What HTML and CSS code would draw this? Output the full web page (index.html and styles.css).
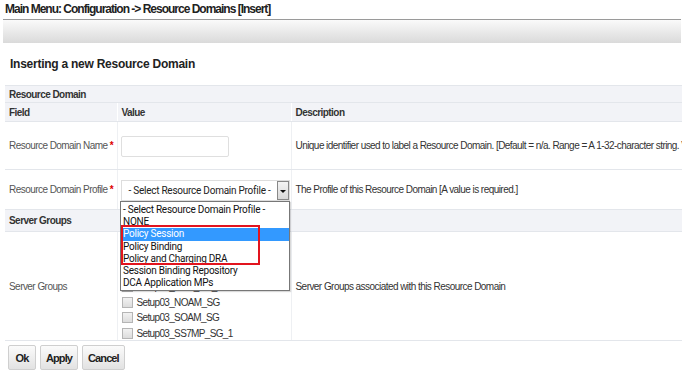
FILE: index.html
```html
<!DOCTYPE html>
<html lang="en">

<head>
    <meta charset="UTF-8">
    <title>Resource Domains [Insert]</title>
    <link rel="stylesheet" href="styles.css">
</head>

<body>
    <div class="page-title">Main Menu: Configuration -&gt; Resource Domains [Insert]</div>
    <div class="toolbar"></div>

    <div class="form-title">Inserting a new Resource Domain</div>

    <div class="form-wrap">
        <table class="form-table">
            <colgroup>
                <col class="col-field">
                <col class="col-value">
                <col class="col-desc">
            </colgroup>
            <tr class="section-row">
                <td colspan="3">Resource Domain</td>
            </tr>
            <tr class="head-row">
                <td>Field</td>
                <td>Value</td>
                <td>Description</td>
            </tr>
            <tr class="row-name">
                <td class="label">Resource Domain Name <span class="req">*</span></td>
                <td><div class="text-input"></div></td>
                <td class="desc">Unique identifier used to label a Resource Domain. [Default = n/a. Range = A 1-32-character string. Valid characters are alphanumeric and underscore.]</td>
            </tr>
            <tr class="row-profile">
                <td class="label">Resource Domain Profile <span class="req">*</span></td>
                <td>
                    <div class="select-box">
                        <span class="select-text">- Select Resource Domain Profile -</span>
                        <span class="select-arrow"></span>
                    </div>
                </td>
                <td class="desc">The Profile of this Resource Domain [A value is required.]</td>
            </tr>
            <tr class="section-row section-tall">
                <td colspan="3">Server Groups</td>
            </tr>
            <tr class="row-groups">
                <td class="label">Server Groups</td>
                <td>
                    <div class="check-list">
                        <div class="check-item"><span class="check"></span>Setup03_DAMP_SG_1</div>
                        <div class="check-item"><span class="check"></span>Setup03_DAMP_SG_2</div>
                        <div class="check-item"><span class="check"></span>Setup03_SBR_SG_1</div>
                        <div class="check-item"><span class="check"></span>Setup03_IPFE_SG_1</div>
                        <div class="check-item"><span class="check"></span>Setup03_NOAM_SG</div>
                        <div class="check-item"><span class="check"></span>Setup03_SOAM_SG</div>
                        <div class="check-item"><span class="check"></span>Setup03_SS7MP_SG_1</div>
                    </div>
                </td>
                <td class="desc">Server Groups associated with this Resource Domain</td>
            </tr>
        </table>

        <!-- open select list, drawn over the table -->
        <div class="drop-list">
            <div class="drop-item">- Select Resource Domain Profile -</div>
            <div class="drop-item">NONE</div>
            <div class="drop-item active">Policy Session</div>
            <div class="drop-item">Policy Binding</div>
            <div class="drop-item">Policy and Charging DRA</div>
            <div class="drop-item">Session Binding Repository</div>
            <div class="drop-item">DCA Application MPs</div>
            <div class="mark-box"></div>
        </div>
    </div>

    <div class="buttons">
        <button class="btn">Ok</button>
        <button class="btn">Apply</button>
        <button class="btn">Cancel</button>
    </div>
</body>

</html>
```

FILE: styles.css
```css
body {
    margin: 0;
    font-family: "Liberation Sans", Arial, sans-serif;
    font-size: 10px;
    letter-spacing: -0.55px;
    color: #333;
    background: #fff;
    width: 685px;
    height: 376px;
    overflow: hidden;
}

.page-title {
    font-size: 12px;
    font-weight: bold;
    letter-spacing: -1px;
    color: #222;
    padding: 2px 0 0 5px;
    height: 19px;
    box-sizing: border-box;
    white-space: nowrap;
}

.toolbar {
    margin: 0 4px 0 3px;
    height: 23px;
    border-top: 1px solid #9a9a9a;
    background: linear-gradient(#fafafa, #dadada);
}

.form-title {
    font-size: 12px;
    font-weight: bold;
    letter-spacing: -0.25px;
    color: #222;
    padding: 14px 0 0 10px;
    height: 42px;
    box-sizing: border-box;
}

.form-wrap {
    position: relative;
    margin-left: 5px;
    width: 677px;
    overflow: hidden;
}

.form-table {
    border-collapse: collapse;
    width: 677px;
    table-layout: fixed;
}

.col-field {
    width: 112px;
}

.col-value {
    width: 174px;
}

.form-table td {
    padding: 0 0 0 4px;
    white-space: nowrap;
    overflow: hidden;
    border-left: 1px solid #eef0f3;
    border-bottom: 1px solid #e3e6eb;
}

.form-table td:first-child {
    border-left: none;
}

.section-row td {
    background: #f2f3f7;
    font-weight: bold;
    color: #333;
    height: 16px;
    border-top: 1px solid #e3e6eb;
}

.section-tall td {
    height: 21px;
}

.head-row td {
    background: #f2f3f7;
    font-weight: bold;
    color: #333;
    height: 18px;
    border-left: 1px solid #fff;
}

.head-row td:first-child {
    border-left: none;
}

.label {
    color: #555;
}

.req {
    color: #d00;
    font-weight: bold;
}

.desc {
    color: #333;
}

.row-name td {
    height: 47px;
}

.row-profile td {
    height: 39px;
}

.row-groups td {
    height: 108px;
}

.text-input {
    width: 106px;
    height: 19px;
    border: 1px solid #dfdfdf;
    border-radius: 2px;
    background: #fff;
    margin: 2px 0 0 -1px;
}

.select-box {
    display: flex;
    align-items: center;
    width: 167px;
    height: 19px;
    border: 1px solid #ddd;
    margin: 1px 0 0 -1px;
    background: #fff;
}

.select-text {
    flex: 1;
    padding-left: 7px;
    font-family: Roboto, "DejaVu Sans", sans-serif;
    font-size: 10px;
    letter-spacing: -0.25px;
    color: #222;
}

.select-arrow {
    width: 12px;
    height: 19px;
    border: 1px solid #888;
    box-sizing: border-box;
    background: linear-gradient(#f4f4f4, #d8d8d8);
    position: relative;
}

.select-arrow::after {
    content: "";
    position: absolute;
    left: 2px;
    top: 8px;
    border-left: 3px solid transparent;
    border-right: 3px solid transparent;
    border-top: 3px solid #111;
}

.check-list {
    display: flex;
    flex-direction: column;
    gap: 3.5px;
    padding-top: 1px;
}

.check-item {
    display: flex;
    align-items: center;
    height: 12px;
    color: #333;
    letter-spacing: -0.65px;
}

.check {
    width: 9px;
    height: 9px;
    border: 1px solid #b5b5b5;
    background: linear-gradient(#f2f2f2, #dcdcdc);
    margin-right: 4px;
}

.drop-list {
    position: absolute;
    left: 115px;
    top: 116px;
    width: 168px;
    padding: 2px 0 1px;
    border: 1px solid #777;
    background: #fff;
    box-shadow: 1px 1px 1px rgba(0, 0, 0, 0.15);
    font-family: Roboto, "DejaVu Sans", sans-serif;
    font-size: 10px;
    letter-spacing: -0.25px;
    color: #111;
}

.drop-item {
    height: 12.2px;
    line-height: 12.2px;
    padding-left: 2px;
    white-space: nowrap;
}

.drop-item.active {
    background: #3399ff;
    color: #fff;
}

.mark-box {
    position: absolute;
    left: 0;
    top: 23px;
    width: 135px;
    height: 36px;
    border: 2px solid #e2141e;
}

.buttons {
    display: flex;
    gap: 4px;
    padding: 4px 0 0 8px;
}

.btn {
    min-width: 28px;
    height: 25px;
    padding: 0 5px;
    border: 1px solid #cfcfcf;
    border-radius: 2px;
    background: linear-gradient(#fbfbfb, #e2e2e2);
    font-family: "Liberation Sans", Arial, sans-serif;
    font-size: 11px;
    font-weight: bold;
    letter-spacing: -0.9px;
    color: #222;
}
```
